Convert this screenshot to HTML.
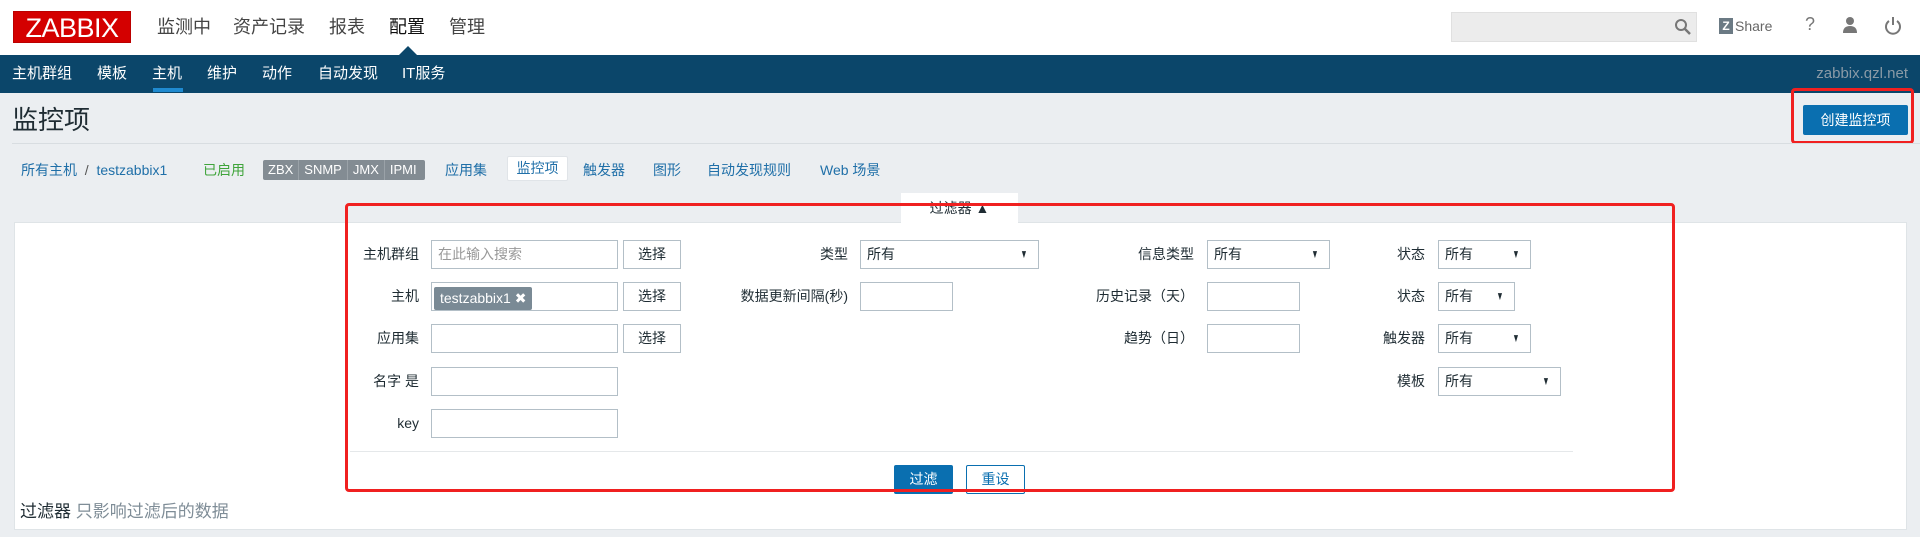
<!DOCTYPE html>
<html><head><meta charset="utf-8"><style>
*{margin:0;padding:0;box-sizing:border-box}
body{width:1920px;height:537px;background:#ebeef1;font-family:"Liberation Sans","Noto Sans CJK SC",sans-serif;position:relative;overflow:hidden;color:#1f2c33}
.a{position:absolute;white-space:nowrap}
.hdr{position:absolute;left:0;top:0;width:1920px;height:55px;background:#fff}
.bar{position:absolute;left:0;top:55px;width:1920px;height:38px;background:#0b466a}
.lbl{position:absolute;font-size:14px;text-align:right;width:200px;line-height:29px}
.in{position:absolute;height:29px;border:1px solid #b3bfc7;background:#fff;font-size:14px;line-height:27px;padding-left:6px}
.btn{position:absolute;height:29px;border:1px solid #b3bfc7;background:#fff;font-size:14px;line-height:27px;text-align:center;width:58px}
.sel::after{content:"▼";position:absolute;right:8px;top:0;font-size:12px;transform:scaleX(.6)}
.blue{color:#1f6fa8}
</style></head><body>
<div class="hdr"></div>
<div class="a" style="left:13px;top:11px;width:118px;height:32px;background:#d40000;color:#fff;font-size:27px;line-height:32px;text-align:center;border:1px solid #b00;letter-spacing:-0.5px">ZABBIX</div>
<div class="a" style="left:157px;top:13px;font-size:18px;line-height:28px;color:#444">监测中</div>
<div class="a" style="left:233px;top:13px;font-size:18px;line-height:28px;color:#444">资产记录</div>
<div class="a" style="left:329px;top:13px;font-size:18px;line-height:28px;color:#444">报表</div>
<div class="a" style="left:389px;top:13px;font-size:18px;line-height:28px;color:#111">配置</div>
<div class="a" style="left:449px;top:13px;font-size:18px;line-height:28px;color:#444">管理</div>
<div class="a" style="left:398px;top:46px;width:0;height:0;border-left:10px solid transparent;border-right:10px solid transparent;border-bottom:10px solid #0b466a"></div>
<div class="a" style="left:1451px;top:12px;width:246px;height:30px;background:#ececec;border:1px solid #e0e0e0"></div>
<svg class="a" style="left:1674px;top:18px" width="18" height="18"><circle cx="7" cy="7" r="5" fill="none" stroke="#777" stroke-width="2"/><line x1="11" y1="11" x2="16" y2="16" stroke="#777" stroke-width="2.5"/></svg>
<div class="a" style="left:1719px;top:18px;width:14px;height:16px;background:#6b7a84;color:#fff;font-size:12px;font-weight:bold;text-align:center;line-height:16px">Z</div>
<div class="a" style="left:1735px;top:16px;font-size:14px;color:#666;line-height:20px">Share</div>
<div class="a" style="left:1805px;top:14px;font-size:18px;color:#777">?</div>
<svg class="a" style="left:1841px;top:16px" width="18" height="18"><circle cx="9" cy="5" r="4" fill="#777"/><path d="M2 17 Q2 10 9 10 Q16 10 16 17Z" fill="#777"/></svg>
<svg class="a" style="left:1884px;top:15px" width="18" height="20"><path d="M5 6 A7 7 0 1 0 13 6" fill="none" stroke="#777" stroke-width="2"/><line x1="9" y1="2" x2="9" y2="10" stroke="#777" stroke-width="2"/></svg>
<div class="bar"></div>
<div class="a" style="top:64px;left:12px;font-size:15px;color:#fff;line-height:20px">主机群组</div>
<div class="a" style="top:64px;left:97px;font-size:15px;color:#fff;line-height:20px">模板</div>
<div class="a" style="top:64px;left:152px;font-size:15px;color:#fff;line-height:20px">主机</div>
<div class="a" style="top:64px;left:207px;font-size:15px;color:#fff;line-height:20px">维护</div>
<div class="a" style="top:64px;left:262px;font-size:15px;color:#fff;line-height:20px">动作</div>
<div class="a" style="top:64px;left:318px;font-size:15px;color:#fff;line-height:20px">自动发现</div>
<div class="a" style="top:64px;left:402px;font-size:15px;color:#fff;line-height:20px">IT服务</div>
<div class="a" style="top:88px;left:153px;width:30px;height:4px;background:#1f8ad0"></div>
<div class="a" style="top:64px;right:12px;font-size:15px;color:#8a9aa6;line-height:20px">zabbix.qzl.net</div>
<div class="a" style="top:104px;left:12px;font-size:26px;line-height:32px;color:#1f2c33">监控项</div>
<div class="a" style="top:105px;left:1803px;width:105px;height:30px;background:#0a6fb0;color:#fff;font-size:14px;line-height:30px;text-align:center;border-radius:2px">创建监控项</div>
<div class="a" style="top:88px;left:1791px;width:123px;height:56px;border:3px solid #f02020;border-radius:4px"></div>
<div class="a" style="top:143px;left:12px;width:1908px;height:1px;background:#d8dde1"></div>
<div class="a blue" style="top:160px;left:21px;font-size:14px;line-height:20px">所有主机 <span style="color:#555">&nbsp;/&nbsp;</span> testzabbix1</div>
<div class="a" style="top:160px;left:203px;font-size:14px;line-height:20px;color:#3fa43b">已启用</div>
<div class="a" style="top:160px;left:263px;height:20px;width:162px;background:#838c93;border-radius:2px;color:#fff;font-size:13px;line-height:20px;display:flex"><span style="padding:0 5px;border-right:1px solid #9aa2a8">ZBX</span><span style="padding:0 5px;border-right:1px solid #9aa2a8">SNMP</span><span style="padding:0 5px;border-right:1px solid #9aa2a8">JMX</span><span style="padding:0 5px">IPMI</span></div>
<div class="a blue" style="top:160px;left:445px;font-size:14px;line-height:20px">应用集</div>
<div class="a" style="top:156px;left:507px;width:61px;height:25px;background:#fff;border:1px solid #e0e4e8;border-radius:2px;font-size:14px;line-height:23px;text-align:center;color:#1f6fa8">监控项</div>
<div class="a blue" style="top:160px;left:583px;font-size:14px;line-height:20px">触发器</div>
<div class="a blue" style="top:160px;left:653px;font-size:14px;line-height:20px">图形</div>
<div class="a blue" style="top:160px;left:707px;font-size:14px;line-height:20px">自动发现规则</div>
<div class="a blue" style="top:160px;left:820px;font-size:14px;line-height:20px">Web 场景</div>
<div class="a" style="top:222px;left:14px;width:1893px;height:308px;background:#fff;border:1px solid #dfe4e7"></div>
<div class="a" style="top:193px;left:901px;width:117px;height:30px;background:#fff;font-size:14px;line-height:30px;text-align:center">过滤器 ▲</div>
<div class="lbl" style="left:219px;top:240px">主机群组</div>
<div class="in" style="left:431px;top:240px;width:187px;color:#999">在此输入搜索</div>
<div class="btn" style="left:623px;top:240px">选择</div>
<div class="lbl" style="left:219px;top:282px">主机</div>
<div class="in" style="left:431px;top:282px;width:187px;padding:2px"><span style="display:inline-block;background:#7a8a95;color:#fff;height:23px;line-height:23px;padding:0 6px;font-size:14px;border-radius:2px">testzabbix1 ✖</span></div>
<div class="btn" style="left:623px;top:282px">选择</div>
<div class="lbl" style="left:219px;top:324px">应用集</div>
<div class="in" style="left:431px;top:324px;width:187px"></div>
<div class="btn" style="left:623px;top:324px">选择</div>
<div class="lbl" style="left:219px;top:367px">名字 是</div>
<div class="in" style="left:431px;top:367px;width:187px"></div>
<div class="lbl" style="left:219px;top:409px">key</div>
<div class="in" style="left:431px;top:409px;width:187px"></div>
<div class="lbl" style="left:648px;top:240px">类型</div>
<div class="in sel" style="left:860px;top:240px;width:179px">所有</div>
<div class="lbl" style="left:648px;top:282px">数据更新间隔(秒)</div>
<div class="in" style="left:860px;top:282px;width:93px"></div>
<div class="lbl" style="left:994px;top:240px">信息类型</div>
<div class="in sel" style="left:1207px;top:240px;width:123px">所有</div>
<div class="lbl" style="left:994px;top:282px">历史记录（天）</div>
<div class="in" style="left:1207px;top:282px;width:93px"></div>
<div class="lbl" style="left:994px;top:324px">趋势（日）</div>
<div class="in" style="left:1207px;top:324px;width:93px"></div>
<div class="lbl" style="left:1225px;top:240px">状态</div>
<div class="in sel" style="left:1438px;top:240px;width:93px">所有</div>
<div class="lbl" style="left:1225px;top:282px">状态</div>
<div class="in sel" style="left:1438px;top:282px;width:77px">所有</div>
<div class="lbl" style="left:1225px;top:324px">触发器</div>
<div class="in sel" style="left:1438px;top:324px;width:93px">所有</div>
<div class="lbl" style="left:1225px;top:367px">模板</div>
<div class="in sel" style="left:1438px;top:367px;width:123px">所有</div>
<div class="a" style="top:451px;left:350px;width:1223px;height:1px;background:#e5e8ea"></div>
<div class="a" style="top:465px;left:894px;width:59px;height:29px;background:#0a6fb0;color:#fff;font-size:14px;line-height:29px;text-align:center;border-radius:2px">过滤</div>
<div class="a" style="top:465px;left:966px;width:59px;height:29px;background:#fff;border:1px solid #0a6fb0;color:#0a6fb0;font-size:14px;line-height:27px;text-align:center;border-radius:2px">重设</div>
<div class="a" style="top:203px;left:345px;width:1330px;height:289px;border:3px solid #f02020;border-radius:4px"></div>
<div class="a" style="top:501px;left:20px;font-size:17px;line-height:22px">过滤器 <span style="color:#7f8d97">只影响过滤后的数据</span></div>
</body></html>
